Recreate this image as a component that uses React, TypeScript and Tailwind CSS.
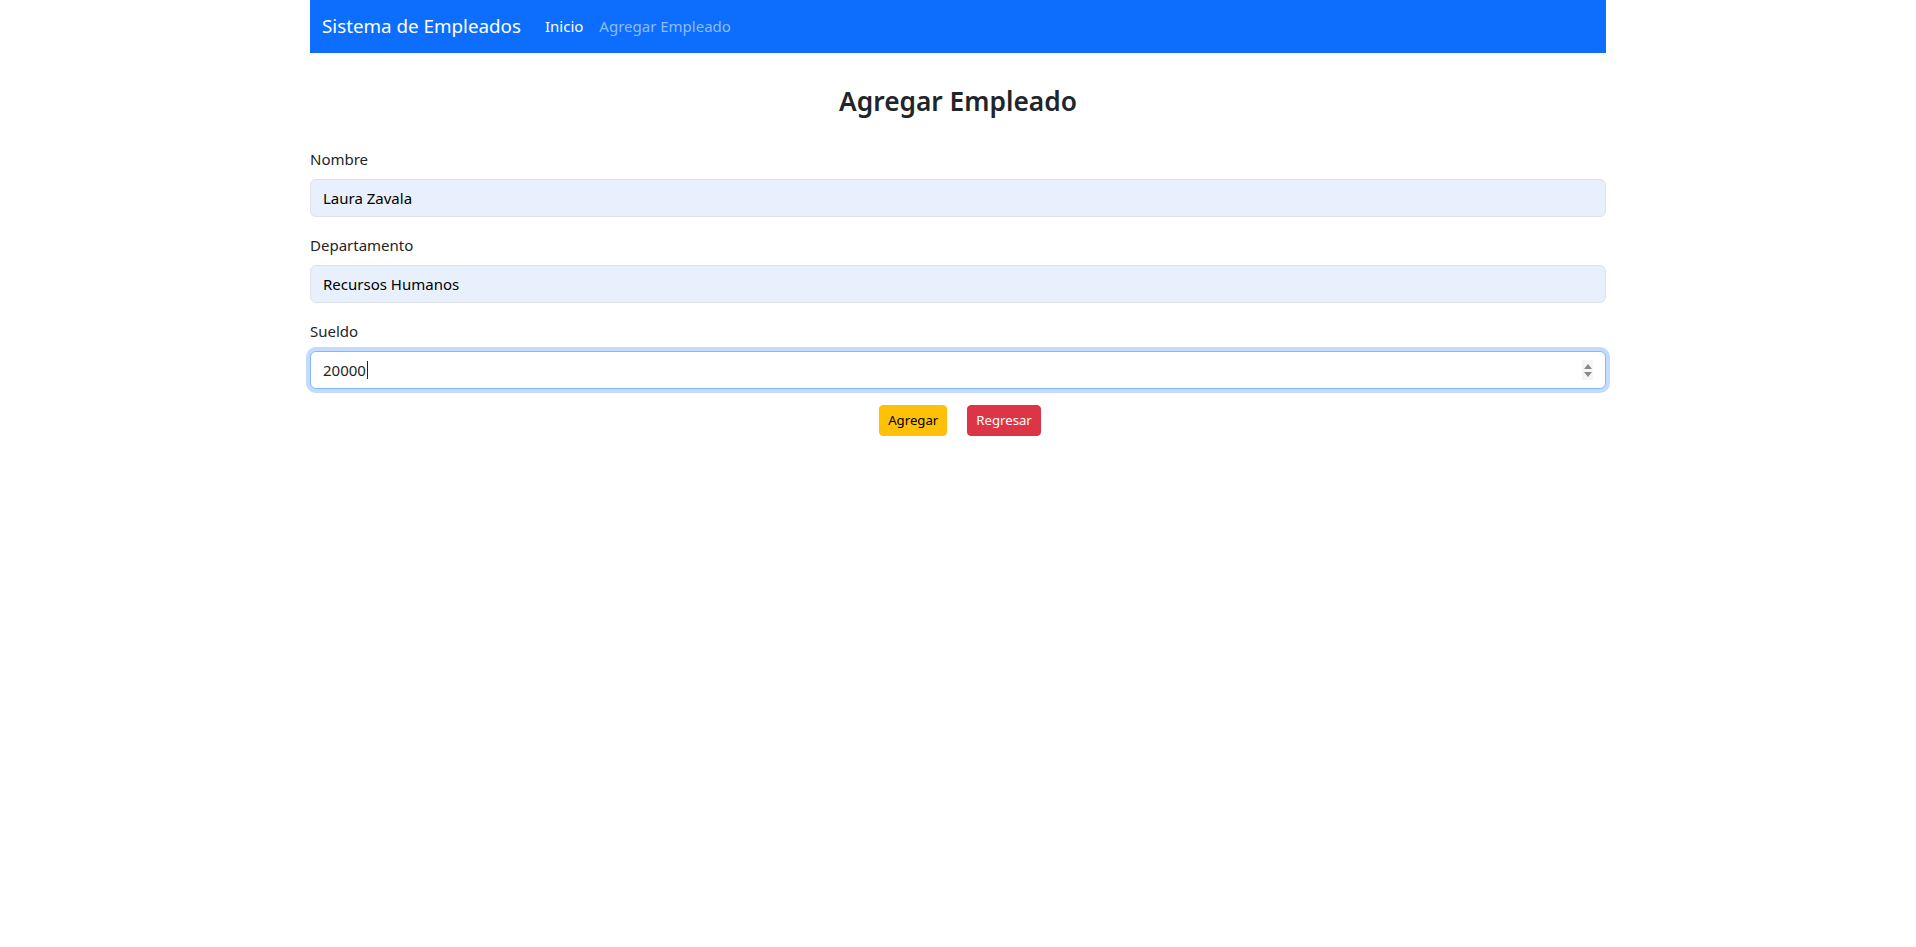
import React from 'react';

const font = { fontFamily: '"Noto Sans", "Open Sans", Arial, sans-serif' };

const inputBase =
  'block w-full h-[38px] px-3 rounded-[6px] text-[15px] outline-none';

export default function App() {
  return (
    <div className="min-h-[947px] bg-white text-[#212529]" style={font}>
      <div className="mx-auto w-[1296px]">
        {/* navbar */}
        <nav className="flex h-[53px] items-center bg-[#0d6efd] px-3 pb-[2px]">
          <a className="mr-4 text-[18.8px] leading-[30px] text-white">Sistema de Empleados</a>
          <ul className="flex items-center">
            <li>
              <a className="px-2 text-[15px] leading-6 text-white">Inicio</a>
            </li>
            <li>
              <a className="px-2 text-[15px] leading-6 text-[#8fbcfe]">Agregar Empleado</a>
            </li>
          </ul>
        </nav>

        <h3 className="mt-[31px] mb-[29px] text-center text-[26.3px] font-semibold leading-[34px]">
          Agregar Empleado
        </h3>

        <form onSubmit={(e) => e.preventDefault()}>
          <div className="mb-4">
            <label className="mb-2 block text-[15px] leading-6">Nombre</label>
            <input
              className={`${inputBase} border border-[#dee2e6] bg-[#e8f0fe] text-black`}
              defaultValue="Laura Zavala"
              readOnly
            />
          </div>

          <div className="mb-4">
            <label className="mb-2 block text-[15px] leading-6">Departamento</label>
            <input
              className={`${inputBase} border border-[#dee2e6] bg-[#e8f0fe] text-black`}
              defaultValue="Recursos Humanos"
              readOnly
            />
          </div>

          <div className="mb-4">
            <label className="mb-2 block text-[15px] leading-6">Sueldo</label>
            <div className="relative">
              <div
                className={`${inputBase} flex items-center border border-[#86b7fe] bg-white text-[#212529] shadow-[0_0_0_4px_rgba(13,110,253,0.25)]`}
              >
                <span>20000</span>
                <span className="ml-[1px] inline-block h-[18px] w-[1px] bg-[#212529]" />
              </div>
              {/* number spinner */}
              <div className="absolute right-[13px] top-[9px] flex h-[20px] w-[11px] flex-col items-center justify-center gap-[3px] bg-[#f5f5f5]">
                <svg width="8" height="5" viewBox="0 0 8 5">
                  <path d="M4 0 L8 5 L0 5 Z" fill="#8a8a8a" />
                </svg>
                <svg width="8" height="5" viewBox="0 0 8 5">
                  <path d="M0 0 L8 0 L4 5 Z" fill="#8a8a8a" />
                </svg>
              </div>
            </div>
          </div>

          <div className="flex justify-center gap-5 pl-[4px]">
            <button
              type="submit"
              className="rounded-[4px] border border-[#ffc107] bg-[#ffc107] px-2 py-1 text-[13.2px] leading-[21px] text-black"
            >
              Agregar
            </button>
            <button
              type="button"
              className="rounded-[4px] border border-[#dc3545] bg-[#dc3545] px-2 py-1 text-[13.2px] leading-[21px] text-white"
            >
              Regresar
            </button>
          </div>
        </form>
      </div>
    </div>
  );
}
